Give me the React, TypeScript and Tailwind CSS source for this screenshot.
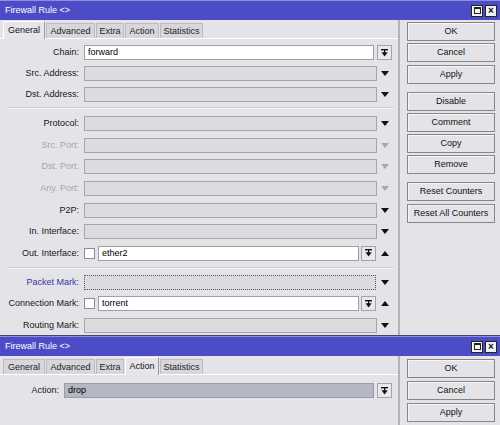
import { ReactNode } from "react";

type Tone = "normal" | "dim" | "blue";

const TAB_NAMES: [string, number][] = [
  ["General", 42],
  ["Advanced", 49],
  ["Extra", 28],
  ["Action", 34],
  ["Statistics", 43],
];

const Tri = ({ up, dim }: { up?: boolean; dim?: boolean }) => (
  <svg width="8" height="5" viewBox="0 0 8 5">
    <polygon points={up ? "0,5 8,5 4,0" : "0,0 8,0 4,5"} fill={dim ? "#a9a9ad" : "#111"} />
  </svg>
);

const DropBox = ({ className = "" }: { className?: string }) => (
  <div className={`flex h-[15px] w-[15px] shrink-0 items-center justify-center border border-[#a4a4a8] bg-[#e9e9ed] ${className}`}>
    <svg width="7" height="8" viewBox="0 0 7 8">
      <rect x="0" y="0" width="7" height="1.4" fill="#111" />
      <rect x="3" y="1" width="1.2" height="3" fill="#111" />
      <polygon points="0.5,3.2 6.7,3.2 3.6,7.6" fill="#111" />
    </svg>
  </div>
);

const Field = ({ value, kind = "gray", className = "" }: { value?: string; kind?: "gray" | "white" | "focus" | "sel"; className?: string }) => {
  const look =
    kind === "white"
      ? "bg-white border-[#a0a0a4]"
      : kind === "focus"
        ? "bg-[#dcdce0] border-dotted border-[#55555a]"
        : kind === "sel"
          ? "bg-[#b5b7c5] border-[#9a9ca8]"
          : "bg-[#dcdce0] border-[#a6a6aa]";
  return (
    <div className={`flex h-[15px] min-w-0 flex-1 items-center border px-[3px] ${look} ${className}`}>
      {value}
    </div>
  );
};

const Check = () => <div className="h-[11px] w-[11px] shrink-0 border border-[#8e8e92] bg-white" />;

const Row = ({
  label,
  tone = "normal",
  labelW = 79,
  side,
  children,
}: {
  label: string;
  tone?: Tone;
  labelW?: number;
  side?: ReactNode;
  children: ReactNode;
}) => {
  const color = tone === "dim" ? "text-[#a6a6aa]" : tone === "blue" ? "text-[#3434a4]" : "text-[#161616]";
  return (
    <div className="flex h-[15px] items-center">
      <div className={`text-right ${color} ${labelW === 79 ? "w-[79px]" : "w-[59px]"}`}>{label}</div>
      <div className={`ml-[5px] flex h-full items-center ${labelW === 79 ? "w-[293px]" : "w-[313px]"}`}>{children}</div>
      <div className="flex h-full w-[15px] items-center justify-center">{side}</div>
    </div>
  );
};

const TitleBar = () => (
  <div className="flex h-[20px] items-center border-t border-[#8f8fe0] bg-[#4c4cc6] pl-[5px] pr-[3px] text-white">
    <span className="flex-1 text-[9px]">Firewall Rule &lt;&gt;</span>
    <div className="flex gap-[2px]">
      <div className="flex h-[12px] w-[12px] items-center justify-center border border-[#222] bg-[#f2f2f2]">
        <div className="h-[7px] w-[7px] border border-[#222] border-t-2" />
      </div>
      <div className="flex h-[12px] w-[12px] items-center justify-center border border-[#222] bg-[#f2f2f2] text-[10px] font-bold leading-none text-[#111]">
        ×
      </div>
    </div>
  </div>
);

const Tabs = ({ active }: { active: string }) => (
  <div className="flex h-[18px] items-end gap-[1px] pl-[3px]">
    {TAB_NAMES.map(([name, w]) =>
      name === active ? (
        <div
          key={name}
          style={{ width: w }}
          className="relative z-10 -mb-px flex h-[18px] items-center justify-center border-l border-t border-white border-r border-r-[#9c9ca0] bg-[#e6e6ea] text-[#111]"
        >
          {name}
        </div>
      ) : (
        <div
          key={name}
          style={{ width: w }}
          className="flex h-[15px] items-center justify-center border border-b-0 border-[#bcbcc0] bg-[#d7d7db] text-[#222]"
        >
          {name}
        </div>
      ),
    )}
  </div>
);

const Btn = ({ children, className = "" }: { children: ReactNode; className?: string }) => (
  <div className={`flex h-[19px] w-[88px] items-center justify-center border border-[#86868a] bg-[#e4e4e8] text-[#111] shadow-[inset_1px_1px_0_#f6f6f8] ${className}`}>
    {children}
  </div>
);

const Sep = () => (
  <div className="ml-[8px] mr-[4px] border-t border-[#cfcfd3] border-b border-b-[#f2f2f4]" />
);

export default function App() {
  return (
    <div className="h-[425px] w-[500px] overflow-hidden bg-[#e4e4e8] font-['Liberation_Sans',Arial,sans-serif] text-[9px] leading-none">
      {/* first window */}
      <div className="flex h-[335px] flex-col">
        <TitleBar />
        <div className="flex flex-1">
          <div className="flex w-[400px] flex-col border-r-2 border-r-[#b4b4b8]">
            <Tabs active="General" />
            <div className="flex-1 border-t border-white pt-[6px]">
              <div className="flex flex-col gap-[6px]">
                <Row label="Chain:" side={<DropBox />}>
                  <Field kind="white" value="forward" className="mr-[3px]" />
                </Row>
                <Row label="Src. Address:" side={<Tri />}>
                  <Field />
                </Row>
                <Row label="Dst. Address:" side={<Tri />}>
                  <Field />
                </Row>
              </div>
              <div className="mb-[7px] mt-[5px]">
                <Sep />
              </div>
              <div className="flex flex-col gap-[6.67px]">
                <Row label="Protocol:" side={<Tri />}>
                  <Field />
                </Row>
                <Row label="Src. Port:" tone="dim" side={<Tri dim />}>
                  <Field />
                </Row>
                <Row label="Dst. Port:" tone="dim" side={<Tri dim />}>
                  <Field />
                </Row>
                <Row label="Any. Port:" tone="dim" side={<Tri dim />}>
                  <Field />
                </Row>
                <Row label="P2P:" side={<Tri />}>
                  <Field />
                </Row>
                <Row label="In. Interface:" side={<Tri />}>
                  <Field />
                </Row>
                <Row label="Out. Interface:" side={<Tri up />}>
                  <Check />
                  <Field kind="white" value="ether2" className="ml-[3px]" />
                  <DropBox className="ml-[2px] mr-[1px]" />
                </Row>
              </div>
              <div className="mb-[6px] mt-[6px]">
                <Sep />
              </div>
              <div className="flex flex-col gap-[6.5px]">
                <Row label="Packet Mark:" tone="blue" side={<Tri />}>
                  <Field kind="focus" className="mr-[1px]" />
                </Row>
                <Row label="Connection Mark:" side={<Tri up />}>
                  <Check />
                  <Field kind="white" value="torrent" className="ml-[3px]" />
                  <DropBox className="ml-[2px] mr-[1px]" />
                </Row>
                <Row label="Routing Mark:" side={<Tri />}>
                  <Field />
                </Row>
              </div>
            </div>
          </div>
          <div className="flex flex-col pl-[7px] pt-[2px]">
            <div className="flex flex-col gap-[2.3px]">
              <Btn>OK</Btn>
              <Btn>Cancel</Btn>
              <Btn>Apply</Btn>
            </div>
            <div className="mt-[8px] flex flex-col gap-[2.3px]">
              <Btn>Disable</Btn>
              <Btn>Comment</Btn>
              <Btn>Copy</Btn>
              <Btn>Remove</Btn>
            </div>
            <div className="mt-[8px] flex flex-col gap-[2.3px]">
              <Btn>Reset Counters</Btn>
              <Btn>Reset All Counters</Btn>
            </div>
          </div>
        </div>
      </div>

      {/* second window */}
      <div className="flex h-[90px] flex-col border-t border-[#45456a]">
        <TitleBar />
        <div className="flex flex-1">
          <div className="flex w-[400px] flex-col border-r-2 border-r-[#b4b4b8]">
            <Tabs active="Action" />
            <div className="flex-1 border-t border-white pt-[8px]">
              <Row label="Action:" labelW={59} side={<DropBox />}>
                <Field kind="sel" value="drop" className="mr-[3px]" />
              </Row>
            </div>
          </div>
          <div className="flex flex-col gap-[3px] pl-[7px] pt-[3px]">
            <Btn>OK</Btn>
            <Btn>Cancel</Btn>
            <Btn>Apply</Btn>
          </div>
        </div>
      </div>
    </div>
  );
}
